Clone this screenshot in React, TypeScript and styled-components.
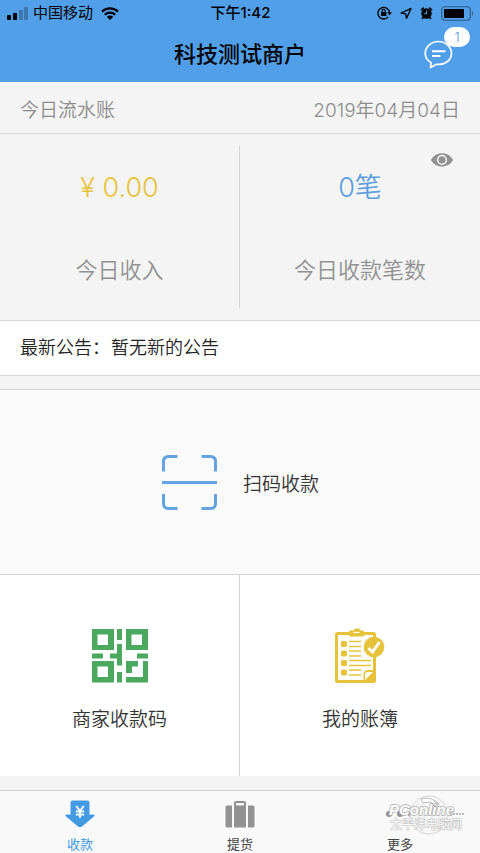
import React from "react";
import styled, { createGlobalStyle } from "styled-components";

const Global = createGlobalStyle`
  *, *::before, *::after { box-sizing: border-box; }
  html, body, #root { height: 100%; margin: 0; }
  body {
    background: #f4f4f4;
    font-family: Inter, "Noto Sans CJK SC", sans-serif;
    font-weight: 350;
    color: #333;
  }
  button { font: inherit; color: inherit; border: 0; padding: 0; background: none; cursor: pointer; }
  h1, p { margin: 0; font-weight: inherit; }
  svg { display: block; flex: none; }
`;

const Page = styled.div`
  min-height: 100%;
  display: flex;
  flex-direction: column;
`;

const Header = styled.header`
  height: 82px;
  background: #529fe9;
  color: #000;
`;

const StatusBar = styled.div`
  display: grid;
  grid-template-columns: 1fr auto 1fr;
  align-items: center;
  height: 26px;
  padding: 0 6px 0 7px;
  font-size: 15px;
  font-weight: 400;
  line-height: 26px;
`;

const StatusGroup = styled.div<{ $end?: boolean }>`
  display: flex;
  align-items: center;
  gap: ${(p) => (p.$end ? 8 : 5)}px;
  justify-content: ${(p) => (p.$end ? "flex-end" : "flex-start")};
`;

const Clock = styled.time`
  font-weight: 500;
`;

const Carrier = styled.span`
  margin-right: 3px;
`;

const TitleBar = styled.div`
  display: grid;
  grid-template-columns: 1fr auto 1fr;
  align-items: center;
  height: 56px;
  padding: 0 24px;
`;

const Title = styled.h1`
  grid-column: 2;
  font-size: 22px;
  font-weight: 500;
  line-height: 56px;
`;

const MessageButton = styled.button`
  position: relative;
  justify-self: end;
  margin-right: 3px;
`;

const Badge = styled.span`
  position: absolute;
  left: 20px;
  top: -13px;
  width: 26px;
  height: 20px;
  border-radius: 10px;
  background: #fff;
  color: #4a97df;
  font-size: 13px;
  line-height: 20px;
  text-align: center;
`;

const DayRow = styled.div`
  display: flex;
  justify-content: space-between;
  height: 52px;
  padding: 3px 20px 0;
  border-bottom: 1px solid #d5d5d5;
  color: #8c8c8c;
  font-size: 19px;
  line-height: 52px;
`;

const Stats = styled.section`
  display: grid;
  grid-template-columns: 1fr 1fr;
  height: 187px;
  padding: 12px 0;
  border-bottom: 1px solid #d5d5d5;
`;

const Stat = styled.div<{ $color: string }>`
  position: relative;
  display: flex;
  flex-direction: column;
  align-items: center;
  padding-top: 24px;
  gap: 46px;

  &:first-child { border-right: 1px solid #d5d5d5; }
  strong {
    color: ${(p) => p.$color};
    font-size: 27px;
    font-weight: 350;
    line-height: 36px;
  }
  span {
    color: #919191;
    font-size: 22px;
    line-height: 36px;
  }
`;

const EyeButton = styled.button`
  position: absolute;
  right: 27px;
  top: 7px;
`;

const Notice = styled.section`
  display: flex;
  gap: 1px;
  height: 55px;
  padding: 0 20px;
  background: #fff;
  border-bottom: 1px solid #d5d5d5;
  color: #222;
  font-size: 18px;
  line-height: 54px;
`;

const ScanButton = styled.button`
  display: flex;
  align-items: center;
  justify-content: center;
  gap: 26px;
  width: 100%;
  height: 186px;
  margin-top: 13px;
  background: #fafafa;
  border-top: 1px solid #d5d5d5;
  border-bottom: 1px solid #d5d5d5;
  font-size: 19px;
`;

const Cards = styled.section`
  display: grid;
  grid-template-columns: 1fr 1fr;
  height: 201px;
  background: #fff;
`;

const Card = styled.button`
  display: flex;
  flex-direction: column;
  align-items: center;
  justify-content: flex-start;
  gap: 21px;
  padding-top: 53px;
  font-size: 19px;
  line-height: 30px;

  &:first-child { border-right: 1px solid #d5d5d5; }
`;

const TabBar = styled.nav`
  position: relative;
  display: grid;
  grid-template-columns: repeat(3, 1fr);
  height: 63px;
  margin-top: auto;
  background: #f9f9f9;
  border-top: 1px solid #d2d2d2;
`;

const Tab = styled.button<{ $active?: boolean }>`
  display: flex;
  flex-direction: column;
  align-items: center;
  gap: 5px;
  padding-top: 8px;
  color: ${(p) => (p.$active ? "#429be3" : "#444")};
  font-size: 13px;
  font-weight: 400;
  line-height: 20px;
`;

const Watermark = styled.svg`
  position: absolute;
  right: 13px;
  top: 3px;
  pointer-events: none;
`;

const SignalIcon = () => (
  <svg width="21" height="14" viewBox="0 0 21 14">
    <rect x="0" y="9" width="4" height="5" rx="1" />
    <rect x="6" y="7" width="4" height="7" rx="1" />
    <rect x="12" y="4" width="4" height="10" rx="1" opacity=".25" />
    <rect x="17" y="1" width="4" height="13" rx="1" opacity=".25" />
  </svg>
);

const WifiIcon = () => (
  <svg width="18" height="13" viewBox="0 0 18 13" fill="none" stroke="#000" strokeWidth="2.3">
    <path d="M1 4.6a11.5 11.5 0 0 1 16 0M3.8 7.7a7.4 7.4 0 0 1 10.4 0" />
    <path d="M9 13 5.8 9.8a4.6 4.6 0 0 1 6.4 0Z" fill="#000" stroke="none" />
  </svg>
);

const LockIcon = () => (
  <svg width="15" height="14" viewBox="0 0 15 14" fill="none" stroke="#000" strokeWidth="1.3">
    <path d="M11.2 10.9A5.8 5.8 0 1 1 12.5 6.5" />
    <path d="M10.2 6.2h4.8l-2.4 3Z" fill="#000" stroke="none" />
    <rect x="4" y="6" width="5.4" height="4" fill="#000" stroke="none" />
    <path d="M5.2 6V4.9a1.5 1.5 0 0 1 3 0V6" strokeWidth="1.1" />
  </svg>
);

const LocationIcon = () => (
  <svg width="12" height="13" viewBox="0 0 13 13" fill="none" stroke="#000" strokeWidth="1.4" strokeLinejoin="round">
    <path d="M12 1 1.2 6l5 .8.8 5Z" />
  </svg>
);

const AlarmIcon = () => (
  <svg width="13" height="14" viewBox="0 0 14 14">
    <circle cx="7" cy="7.500" r="5.600" />
    <path d="M1.500 3.500 3.500 1.700M12.500 3.500 10.500 1.700M3.200 12 2.600 12.800M10.800 12l.6.8" stroke="#000" strokeWidth="1.800" strokeLinecap="round" />
    <path d="M7.200 4.200v3.600H4.500" fill="none" stroke="#529fe9" strokeWidth="1.100" />
  </svg>
);

const BatteryIcon = () => (
  <svg width="33" height="15" viewBox="0 0 33 15">
    <rect x=".7" y=".7" width="28.6" height="13.6" rx="3.5" fill="none" stroke="#2d5881" strokeWidth="1.1" />
    <rect x="3" y="3" width="20" height="9" rx="1" />
    <path d="M31 5q2 2.500 0 5Z" fill="#2d5881" />
  </svg>
);

const MessageIcon = () => (
  <svg width="29" height="29" viewBox="0 0 29 29" fill="none" stroke="#fff" strokeWidth="1.7" strokeLinejoin="round">
    <path d="M6.500 27.500 7 22.600C3.500 20.500 1.200 17.200 1.200 13.500 1.200 7 7 1.500 14.300 1.500S27.500 7 27.500 13.500c0 6.700-6.700 11.700-15 10.800Z" />
    <path d="M8 11.200h13.500M8 16h8.500" strokeWidth="1.900" />
  </svg>
);

const EyeIcon = () => (
  <svg width="22" height="14" viewBox="0 0 22 14">
    <path d="M0 7C2 2.800 6 .2 11 .2S20 2.800 22 7c-2 4.200-6 6.500-11 6.500S2 11.200 0 7Z" fill="#929292" />
    <circle cx="11" cy="6.900" r="4.300" fill="none" stroke="#f4f4f4" strokeWidth="1.500" />
  </svg>
);

const ScanIcon = () => (
  <svg width="56" height="56" viewBox="0 0 56 56" fill="none" stroke="#62a3e0" strokeWidth="3">
    <path d="M2.500 17.500v-10q0-5 5-5h9M40.500 2.500h9q5 0 5 5v10M54.500 40v9.500q0 5-5 5h-9M16.500 54.500h-9q-5 0-5-5V40M1 28.500h55" />
  </svg>
);

const QrIcon = () => (
  <svg width="56" height="56" viewBox="0 0 56 56" fill="#4aa95f">
    <path
      fillRule="evenodd"
      d="M0 1h22v21H0ZM5.500 6.500v10.500H16V6.500ZM34 1h22v21H34ZM39.500 6.500v10.500H50V6.500ZM0 33h22v21.500H0ZM5.500 38.500v10.500H16V38.500Z"
    />
    <path d="M25 1h5v11h-5ZM0 25.500h11v5H0ZM18 25.500h7V16h5v21.500h-5v-7h-7ZM45 25.500h11v5H45ZM25 44h5v10.500h-5ZM34 33h12v5.500h-6V45h-6ZM51 33h5v21.500H34V49h17Z" />
  </svg>
);

const LedgerIcon = () => (
  <svg width="56" height="56" viewBox="0 0 56 56" fill="none" stroke="#e7c33c">
    <rect x="4.500" y="5.500" width="38" height="48" rx="1" strokeWidth="3" />
    <path d="M17.500 8V3h4q.5-2 2.500-2h2q2 0 2.500 2h3v5Z" fill="#e7c33c" strokeWidth="1" />
    <path d="M21.500 4.500h6" stroke="#fff" strokeWidth="1.200" />
    <g fill="#e7c33c" stroke="none">
      <rect x="9" y="13" width="6" height="6" rx="1.500" />
      <rect x="9" y="22.500" width="6" height="6" rx="1.500" />
      <rect x="9" y="32" width="6" height="6" rx="1.500" />
      <rect x="9" y="41.500" width="6" height="6" rx="1.500" />
    </g>
    <path d="M17 13.500h12M17 18.500h12M17 23h12M17 28h12M17 32.500h22M17 37.500h22M17 42h12M17 47h12" strokeWidth="1.500" />
    <path d="M32 53v-7q0-3.500 3.500-3.500H43V54Z" fill="#e7c33c" />
    <path d="M33 52v-5.500q0-2.500 2.500-2.500H41Z" fill="#fff" stroke="none" />
    <circle cx="42" cy="19" r="10.300" fill="#e7c33c" stroke="none" />
    <path d="m36.500 20 4 4 7-10" stroke="#fff" strokeWidth="3" />
  </svg>
);

const ReceiveIcon = () => (
  <svg width="30" height="30" viewBox="0 0 30 30">
    <path
      d="M7.500 1.500h15q2 0 2 2v12h4q2 .2.500 2L17 27.500q-2 1.500-4 0L1 17.500q-1.500-1.800.5-2h4v-12q0-2 2-2Z"
      fill="#429be3"
    />
    <path d="m11.300 7 3.700 5 3.700-5M15 12v7M10.800 12.500h8.400M10.800 15.700h8.400" fill="none" stroke="#fff" strokeWidth="1.800" />
  </svg>
);

const LuggageIcon = () => (
  <svg width="30" height="30" viewBox="0 0 30 30" fill="#929292">
    <path d="M2 6.500h5v22H2q-1.500 0-1.500-1.500V8q0-1.500 1.500-1.500ZM23 6.500h5q1.500 0 1.500 1.500v19q0 1.500-1.500 1.500h-5Z" />
    <path fillRule="evenodd" d="M9 28.500V4q0-2 2-2h8q2 0 2 2v24.500ZM11 4v2.500h8V4Z" />
  </svg>
);

const MoreIcon = () => (
  <svg width="30" height="30" viewBox="0 0 30 30" fill="#929292">
    <circle cx="4" cy="15" r="3" />
    <circle cx="15" cy="15" r="3" />
    <circle cx="26" cy="15" r="3" />
  </svg>
);

const WatermarkLogo = () => (
  <Watermark width="82" height="46" viewBox="0 0 82 46" aria-hidden="true">
    <circle cx="44" cy="21" r="19" fill="#f6f6f6" stroke="#d6d6d6" strokeWidth="1" />
    <path d="M36 5q10-3 18 5l-4 3-4-5-8 1ZM49 7l4 3" fill="#fff" stroke="#bdbdbd" strokeWidth="1" />
    <g fill="#fff" paintOrder="stroke" strokeLinejoin="round">
      <text x="4" y="21" fontFamily="Liberation Sans, sans-serif" fontSize="15" fontStyle="italic" fontWeight="700" stroke="#aaa" strokeWidth="1.500">
        PConline
      </text>
      <text x="5" y="35" fontFamily="Noto Sans CJK SC, sans-serif" fontSize="12" fontWeight="400" stroke="#b8b8b8" strokeWidth="1">
        太平洋电脑网
      </text>
    </g>
    <path d="M65 20h15" stroke="#bbb" strokeWidth="2" strokeDasharray="2 1" />
  </Watermark>
);

export default function App() {
  return (
    <Page>
      <Global />
      <Header>
        <StatusBar>
          <StatusGroup>
            <SignalIcon />
            <Carrier>中国移动</Carrier>
            <WifiIcon />
          </StatusGroup>
          <Clock>下午1:42</Clock>
          <StatusGroup $end>
            <LockIcon />
            <LocationIcon />
            <AlarmIcon />
            <BatteryIcon />
          </StatusGroup>
        </StatusBar>
        <TitleBar>
          <Title>科技测试商户</Title>
          <MessageButton aria-label="消息">
            <MessageIcon />
            <Badge>1</Badge>
          </MessageButton>
        </TitleBar>
      </Header>

      <DayRow>
        <span>今日流水账</span>
        <time dateTime="2019-04-04">2019年04月04日</time>
      </DayRow>

      <Stats>
        <Stat $color="#e7c33c">
          <strong>¥ 0.00</strong>
          <span>今日收入</span>
        </Stat>
        <Stat $color="#5c9fdc">
          <strong>0笔</strong>
          <span>今日收款笔数</span>
          <EyeButton aria-label="隐藏金额">
            <EyeIcon />
          </EyeButton>
        </Stat>
      </Stats>

      <Notice>
        <span>最新公告：</span>
        <p>暂无新的公告</p>
      </Notice>

      <ScanButton>
        <ScanIcon />
        扫码收款
      </ScanButton>

      <Cards>
        <Card>
          <QrIcon />
          商家收款码
        </Card>
        <Card>
          <LedgerIcon />
          我的账簿
        </Card>
      </Cards>

      <TabBar>
        <Tab $active>
          <ReceiveIcon />
          收款
        </Tab>
        <Tab>
          <LuggageIcon />
          提货
        </Tab>
        <Tab>
          <MoreIcon />
          更多
        </Tab>
        <WatermarkLogo />
      </TabBar>
    </Page>
  );
}
